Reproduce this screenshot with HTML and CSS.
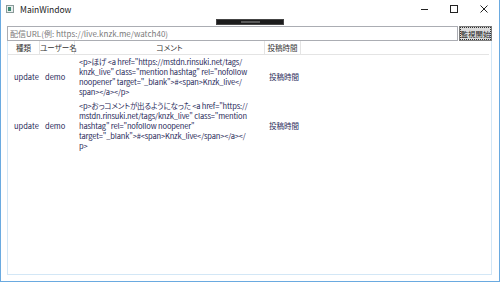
FILE: index.html
```html
<!DOCTYPE html>
<html lang="ja">
<head>
  <meta charset="UTF-8" />
  <title>MainWindow</title>
  <link rel="stylesheet" href="styles.css">
</head>
<body>

<div class="window">

  <!-- TITLE BAR -->
  <div class="titlebar">
    <div class="app-icon"><span></span></div>
    <div class="title">MainWindow</div>
    <div class="controls">
      <svg class="ctl" width="30" height="20" viewBox="0 0 30 20"><line x1="12" y1="9.5" x2="19" y2="9.5" stroke="#222" stroke-width="1"/></svg>
      <svg class="ctl" width="30" height="20" viewBox="0 0 30 20"><rect x="11.5" y="5.5" width="7" height="7" fill="none" stroke="#222" stroke-width="1"/></svg>
      <svg class="ctl" width="30" height="20" viewBox="0 0 30 20"><path d="M11.5 5.5 L18.5 12.5 M18.5 5.5 L11.5 12.5" stroke="#222" stroke-width="1"/></svg>
    </div>
  </div>

  <div class="debug-bar"><span></span></div>

  <div class="content">

    <div class="url-row">
      <input class="url-input" type="text" placeholder="配信URL(例: https://live.knzk.me/watch40)">
      <button class="start-btn">監視開始</button>
    </div>

    <!-- DATA GRID -->
    <div class="grid">
      <div class="grid-head">
        <div class="hcell c1">種類</div>
        <div class="hcell c2">ユーザー名</div>
        <div class="hcell c3">コメント</div>
        <div class="hcell c4">投稿時間</div>
      </div>

      <div class="grid-row">
        <div class="cell c1">update</div>
        <div class="cell c2">demo</div>
        <div class="cell c3">&lt;p&gt;ほげ &lt;a href="https://mstdn.rinsuki.net/tags/<br>knzk_live" class="mention hashtag" rel="nofollow<br>noopener" target="_blank"&gt;#&lt;span&gt;Knzk_live&lt;/<br>span&gt;&lt;/a&gt;&lt;/p&gt;</div>
        <div class="cell c4">投稿時間</div>
      </div>

      <div class="grid-row">
        <div class="cell c1">update</div>
        <div class="cell c2">demo</div>
        <div class="cell c3">&lt;p&gt;おっコメントが出るようになった &lt;a href="https://<br>mstdn.rinsuki.net/tags/knzk_live" class="mention<br>hashtag" rel="nofollow noopener"<br>target="_blank"&gt;#&lt;span&gt;Knzk_live&lt;/span&gt;&lt;/a&gt;&lt;/<br>p&gt;</div>
        <div class="cell c4">投稿時間</div>
      </div>
    </div>

  </div>
</div>

</body>
</html>
```

FILE: styles.css
```css
body {
  margin: 0;
  font-family: "Noto Sans CJK JP", "Noto Sans", sans-serif;
  font-size: 7.5px;
  font-feature-settings: "palt";
  background: #fff;
  overflow: hidden;
}

.window {
  position: relative;
  width: 500px;
  height: 282px;
  box-sizing: border-box;
  border: 1px solid #6aaae0;
  border-top: none;
  display: flex;
  flex-direction: column;
  background: #fff;
}

.titlebar {
  height: 26px;
  display: flex;
  align-items: flex-start;
  flex-shrink: 0;
}

.app-icon {
  width: 8px;
  height: 8px;
  margin: 5px 0 0 5px;
  border: 1px solid #8a9a9a;
  background: #e8eeee;
  box-sizing: border-box;
  padding: 1px;
}

.app-icon span {
  display: block;
  width: 3px;
  height: 4px;
  background: #3c8a70;
}

.title {
  margin: 3px 0 0 6px;
  color: #222;
  font-size: 8.5px;
}

.controls {
  margin-left: auto;
  display: flex;
}

.ctl {
  display: block;
}

.debug-bar {
  position: absolute;
  left: 215px;
  top: 19px;
  width: 68px;
  height: 6px;
  background: #1c1c1c;
  border: 1px solid #444;
  box-sizing: border-box;
}

.debug-bar span {
  position: absolute;
  left: 24px;
  top: 1px;
  width: 19px;
  height: 2px;
  background: #5a5a5a;
}

.content {
  flex: 1;
  display: flex;
  flex-direction: column;
  padding: 0 7px 6px 6px;
  min-height: 0;
}

.url-row {
  display: flex;
  height: 15px;
  flex-shrink: 0;
}

.url-input {
  flex: 1;
  height: 15px;
  box-sizing: border-box;
  border: 1px solid #abadb3;
  margin: 0;
  padding: 0 2px;
  font-family: inherit;
  font-feature-settings: "palt";
  font-size: 8px;
  color: #222;
  outline: none;
}

.url-input::placeholder {
  color: #7a7a7a;
}

.start-btn {
  width: 33px;
  height: 15px;
  margin: 0 0 0 1px;
  padding: 0;
  box-sizing: border-box;
  border: 1px solid #7c7c7c;
  outline: 1px dotted #333;
  outline-offset: -2px;
  background: #dcdcdc;
  font-family: inherit;
  font-size: 7.4px;
  white-space: nowrap;
  color: #222;
}

.grid {
  flex: 1;
  border: 1px solid #d3e7f6;
  border-top: none;
  display: flex;
  flex-direction: column;
}

.grid-head {
  display: flex;
  height: 13px;
  border-bottom: 1px solid #e4e4e4;
  margin-right: 2px;
  color: #333;
}

.hcell {
  box-sizing: border-box;
  border-right: 1px solid #e4e4e4;
  text-align: center;
  line-height: 13px;
  white-space: nowrap;
}

.c1 { width: 32px; }
.c2 { width: 35px; }
.c3 { width: 190px; }
.c4 { width: 36px; }

.grid-row {
  display: flex;
  align-items: center;
  padding: 2px 0;
  color: #1f2858;
  line-height: 10px;
}

.cell {
  box-sizing: border-box;
  padding-left: 4px;
  white-space: nowrap;
}

.cell.c1 { padding-left: 6px; }
.cell.c2 { padding-left: 5px; }
.cell.c3 { letter-spacing: -0.15px; }
```
